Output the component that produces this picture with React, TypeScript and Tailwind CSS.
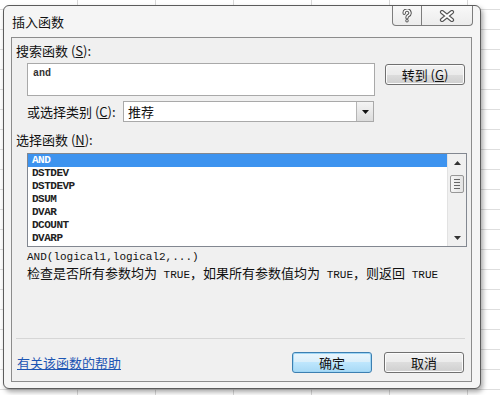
import React from "react";

const ui = "font-['Noto_Sans_CJK_SC','Microsoft_YaHei',sans-serif]";
const mono = "font-['Liberation_Mono','Courier_New',monospace]";

function Btn({ children, primary = false }: { children: React.ReactNode; primary?: boolean }) {
  return (
    <div
      className={`w-[80px] h-[21px] rounded-[3px] border flex items-center justify-center text-[13px] leading-[15px] text-[#111] ${
        primary
          ? "border-[#3c7fb1] shadow-[inset_0_0_0_1px_#9fd6f5] bg-[linear-gradient(#eaf6fd,#d9eefa_50%,#bee6fd_50%,#a7d9f5)]"
          : "border-[#707070] shadow-[inset_0_0_0_1px_#fbfbfb] bg-[linear-gradient(#f2f2f2,#ebebeb_50%,#dddddd_50%,#cfcfcf)]"
      }`}
    >
      {children}
    </div>
  );
}

const items = ["AND", "DSTDEV", "DSTDEVP", "DSUM", "DVAR", "DCOUNT", "DVARP"];

export default function App() {
  return (
    <div
      className={`${ui} w-[500px] h-[395px] overflow-hidden bg-white bg-[image:repeating-linear-gradient(90deg,transparent_0_77px,#d8d8d8_77px_78px),repeating-linear-gradient(180deg,transparent_0_9px,#dedede_9px_10px,transparent_10px_20px)] pl-[3px] pt-[5px]`}
    >
      <div className="w-[478px] h-[384px] rounded-[6px] border border-[#5c5c5c] bg-[#f5f5f5] shadow-[2px_3px_5px_rgba(0,0,0,0.35)] flex flex-col">
        {/* title bar */}
        <div className="h-[31px] flex items-start justify-between shrink-0">
          <div className="pl-[8px] pt-[8px] text-[13px] leading-[15px] text-[#111]">插入函数</div>
          <div className="flex mr-[7px]">
            <div className="w-[30px] h-[20px] border border-t-0 border-[#7d7d7d] rounded-bl-[4px] bg-[linear-gradient(#f8f8f8,#ececec)] flex items-center justify-center">
              <svg width="10" height="14" viewBox="0 0 10 14">
                <path d="M2.2 4.2 A2.9 2.9 0 1 1 6.2 6.6 C5.2 7.1 5 7.6 5 8.8" fill="none" stroke="#555" strokeWidth="3.4" strokeLinecap="round" />
                <circle cx="5" cy="11.8" r="1.7" fill="#555" />
                <path d="M2.2 4.2 A2.9 2.9 0 1 1 6.2 6.6 C5.2 7.1 5 7.6 5 8.8" fill="none" stroke="#fff" strokeWidth="1.4" strokeLinecap="round" />
                <circle cx="5" cy="11.8" r="0.8" fill="#fff" />
              </svg>
            </div>
            <div className="w-[51px] h-[20px] border border-t-0 border-l-0 border-[#7d7d7d] rounded-br-[4px] bg-[linear-gradient(#f8f8f8,#ececec)] flex items-center justify-center">
              <svg width="16" height="12" viewBox="0 0 16 12">
                <path d="M3 2 L13 10 M13 2 L3 10" fill="none" stroke="#555" strokeWidth="4.2" strokeLinecap="round" />
                <path d="M3 2 L13 10 M13 2 L3 10" fill="none" stroke="#fff" strokeWidth="2" strokeLinecap="round" />
              </svg>
            </div>
          </div>
        </div>

        {/* client area */}
        <div className="ml-[7px] mr-[8px] h-[345px] shrink-0 border border-[#8c8c8c] bg-[#f0f0f0] flex flex-col text-[#111]">
          <div className="pl-[4px] mt-[5px] text-[13px] leading-[15px]">
            搜索函数 (<span className="underline">S</span>):
          </div>

          <div className="flex items-start pl-[15px] mt-[5px]">
            <div className={`${mono} w-[348px] h-[33px] bg-white border border-[#a9a9a9] pl-[5px] pt-[4px] text-[10px] leading-[12px] font-bold text-[#333]`}>
              and
            </div>
            <div className="ml-[10px] mt-[1px]">
              <Btn>
                转到 (<span className="underline">G</span>)
              </Btn>
            </div>
          </div>

          <div className="flex items-center pl-[15px] mt-[5px]">
            <div className="w-[96px] text-[13px] leading-[15px]">
              或选择类别 (<span className="underline">C</span>):
            </div>
            <div className="w-[251px] h-[21px] bg-white border border-[#a9a9a9] flex items-stretch">
              <div className="flex-1 pl-[4px] text-[13px] leading-[19px]">推荐</div>
              <div className="w-[17px] border-l border-[#b5b5b5] bg-[linear-gradient(#f4f4f4,#dcdcdc)] flex items-center justify-center">
                <svg width="7" height="4" viewBox="0 0 7 4">
                  <path d="M0 0 H7 L3.5 4 Z" fill="#111" />
                </svg>
              </div>
            </div>
          </div>

          <div className="pl-[4px] mt-[10px] text-[13px] leading-[15px]">
            选择函数 (<span className="underline">N</span>):
          </div>

          <div className="ml-[15px] mt-[6px] w-[440px] h-[94px] bg-white border border-[#828790] flex">
            <div className="flex-1 flex flex-col">
              {items.map((it, i) => (
                <div
                  key={it}
                  className={`${mono} h-[13px] text-[11px] leading-[13px] font-bold tracking-[-0.5px] pl-[4px] ${
                    i === 0 ? "bg-[#3d93ef] text-white" : "text-[#222]"
                  }`}
                >
                  {it}
                </div>
              ))}
            </div>
            <div className="w-[19px] bg-[#f0f0f0] border-l border-[#e2e2e2] flex flex-col items-center">
              <div className="h-[17px] flex items-center justify-center">
                <svg width="7" height="4" viewBox="0 0 7 4">
                  <path d="M0 4 H7 L3.5 0 Z" fill="#333" />
                </svg>
              </div>
              <div className="mt-[4px] w-[14px] h-[18px] rounded-[2px] border border-[#979797] bg-[linear-gradient(90deg,#f5f5f5,#e3e3e3)] flex flex-col items-center justify-center gap-[2px]">
                <div className="w-[6px] h-px bg-[#666]" />
                <div className="w-[6px] h-px bg-[#666]" />
                <div className="w-[6px] h-px bg-[#666]" />
                <div className="w-[6px] h-px bg-[#666]" />
              </div>
              <div className="flex-1" />
              <div className="h-[17px] flex items-center justify-center">
                <svg width="7" height="4" viewBox="0 0 7 4">
                  <path d="M0 0 H7 L3.5 4 Z" fill="#333" />
                </svg>
              </div>
            </div>
          </div>

          <div className={`${mono} pl-[15px] mt-[4px] h-[12px] text-[11px] leading-[12px] text-[#111]`}>
            AND(logical1,logical2,...)
          </div>
          <div className="pl-[15px] mt-[2px] h-[15px] flex items-baseline text-[13px] leading-[15px] text-[#111] whitespace-nowrap">
            <span>检查是否所有参数均为</span>
            <span className={`${mono} text-[11px] leading-[15px] whitespace-pre`}> TRUE</span>
            <span>，如果所有参数值均为</span>
            <span className={`${mono} text-[11px] leading-[15px] whitespace-pre`}> TRUE</span>
            <span>，则返回</span>
            <span className={`${mono} text-[11px] leading-[15px] whitespace-pre`}> TRUE</span>
          </div>

          <div className="flex-1" />
          <div className="ml-[4px] mr-[6px] h-px bg-[#d6d6d6]" />
          <div className="flex items-center justify-between pl-[5px] pr-[7px] mt-[13px] mb-[8px]">
            <span className="text-[13px] leading-[15px] text-[#1d55b3] underline">有关该函数的帮助</span>
            <div className="flex gap-[12px]">
              <Btn primary>确定</Btn>
              <Btn>取消</Btn>
            </div>
          </div>
        </div>
      </div>
    </div>
  );
}
